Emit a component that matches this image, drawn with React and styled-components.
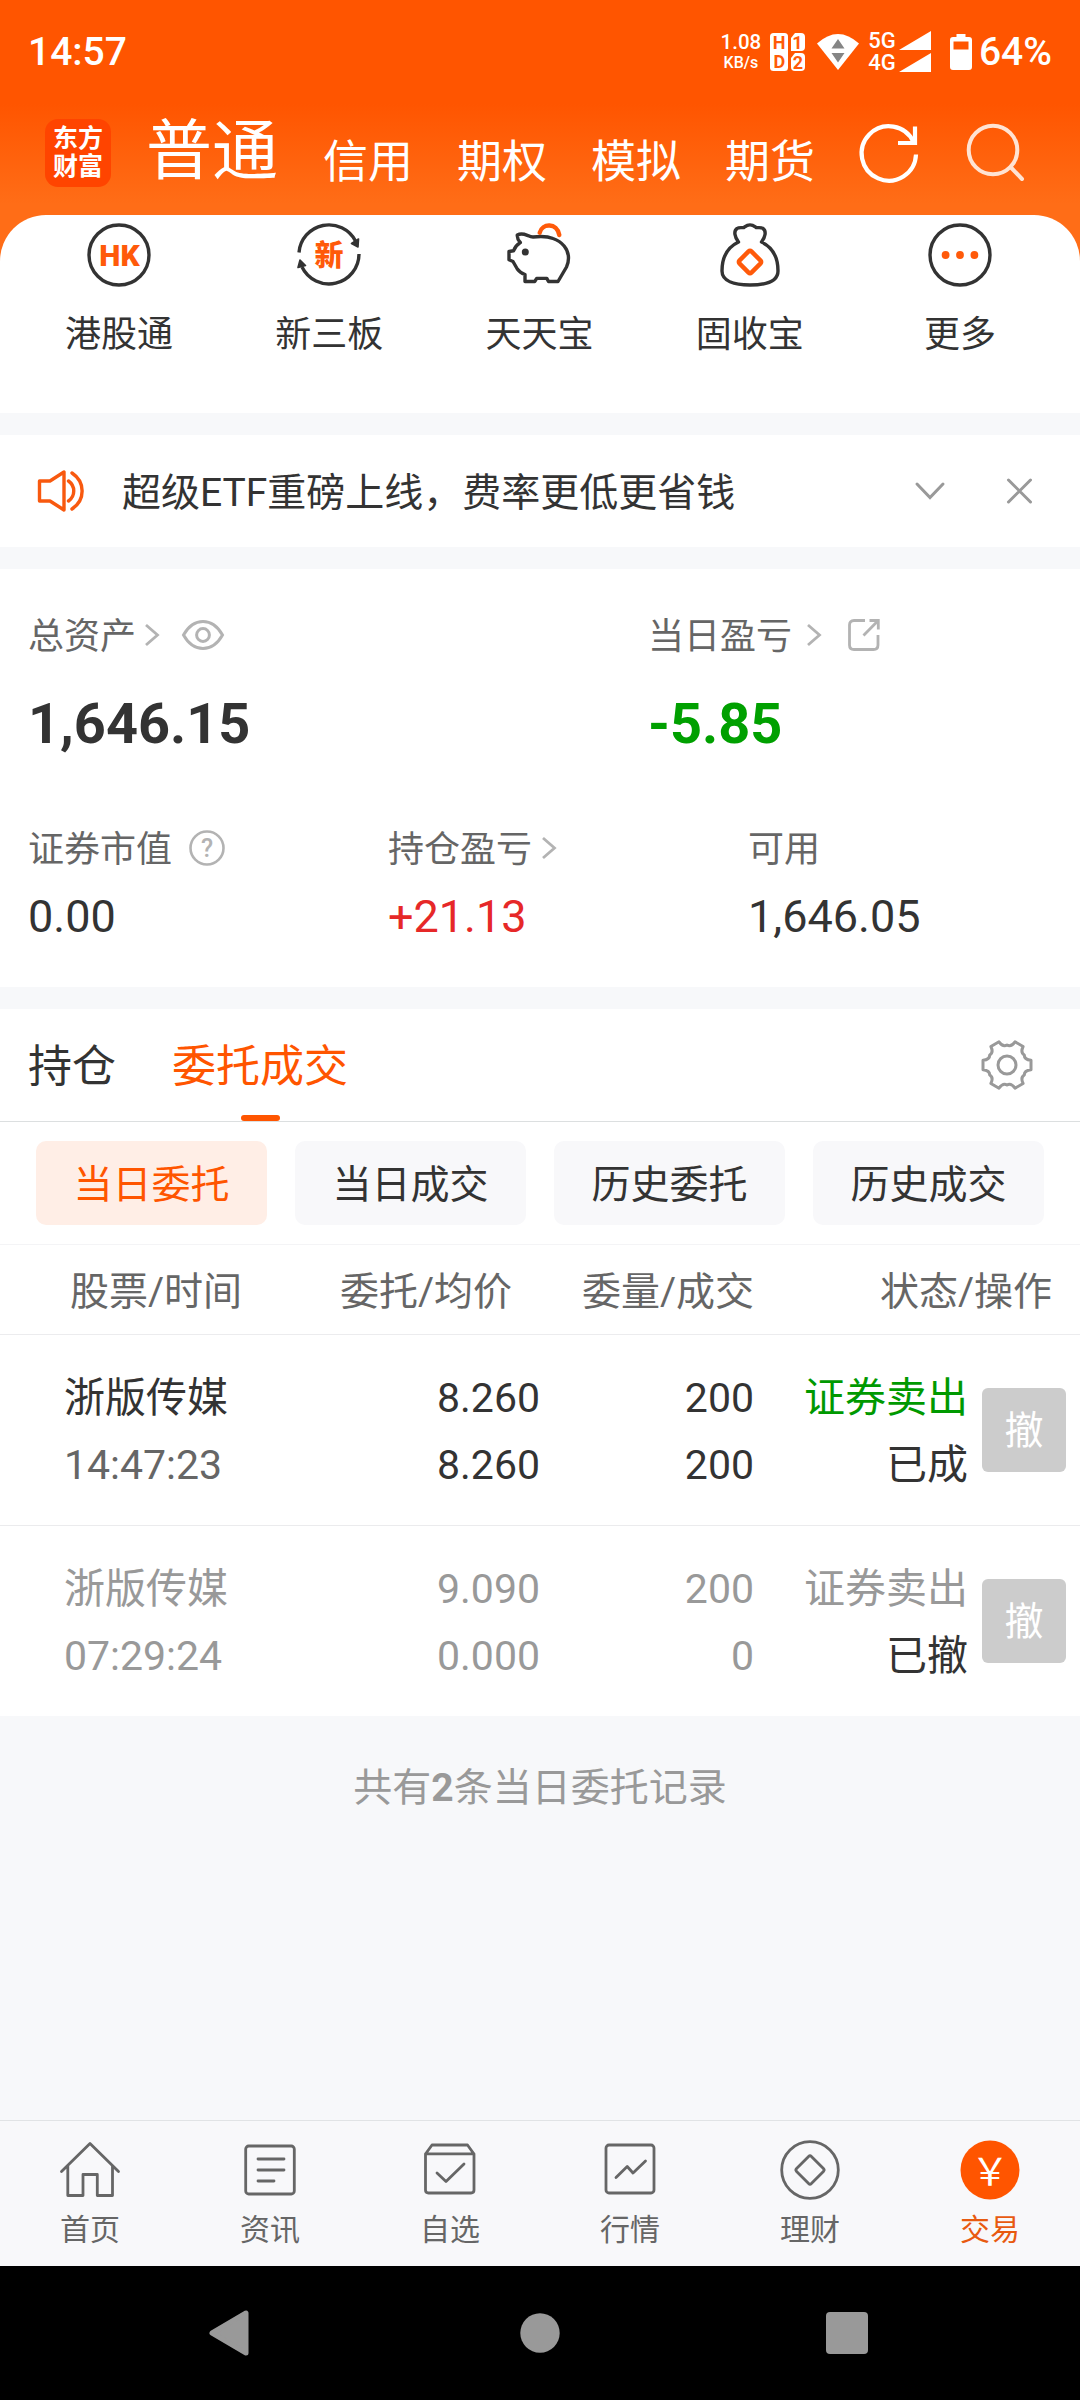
import React from "react";
import styled, { createGlobalStyle } from "styled-components";

const Global = createGlobalStyle`
  * { box-sizing: border-box; }
  html, body { margin: 0; padding: 0; background: #000; }
  body { font-family: Roboto, "Noto Sans CJK SC", sans-serif; color: #333; -webkit-font-smoothing: antialiased; }
  svg { display: block; flex: none; overflow: visible; }
`;

const Screen = styled.div`
  width: 1080px;
  height: 2400px;
  display: flex;
  flex-direction: column;
  overflow: hidden;
  background: #f7f8fa;
`;

const Top = styled.div`
  height: 275px;
  margin-bottom: -60px;
  flex: none;
  background: linear-gradient(#ff5500 0, #ff5500 104px, #ff6d17 204px);
  color: #fff;
`;

const StatusBar = styled.div`
  height: 102px;
  padding: 1px 28px 0;
  display: flex;
  align-items: center;
  justify-content: space-between;
`;

const StatusText = styled.span`
  font-size: 39px;
  line-height: 46px;
  font-weight: 500;
  white-space: nowrap;
`;

const StatusIcons = styled.div`
  display: flex;
  align-items: center;
`;

const Stack = styled.div`
  display: flex;
  flex-direction: column;
  align-items: center;
  width: ${(p) => p.$w}px;
  margin-right: ${(p) => p.$gap}px;
  font-weight: 500;
  white-space: nowrap;
  font-size: ${(p) => p.$size}px;
  line-height: 22px;
`;

const Small = styled.span`
  font-size: 16px;
  line-height: 19px;
`;

const Spaced = styled.div`
  margin-right: ${(p) => p.$gap}px;
`;

const Header = styled.div`
  height: 113px;
  padding: 17px 55px 0 45px;
  display: flex;
  align-items: flex-start;
`;

const Logo = styled.div`
  width: 67px;
  height: 68px;
  border-radius: 13px;
  background: #ff4400;
  font-size: 25px;
  line-height: 28px;
  font-weight: 700;
  text-align: center;
  padding-top: 6px;
  margin-right: 35px;
`;

const Account = styled.div`
  font-size: ${(p) => (p.$active ? 66 : 45)}px;
  line-height: 66px;
  margin-top: ${(p) => (p.$active ? 0 : 11)}px;
  margin-right: ${(p) => p.$gap}px;
  white-space: nowrap;
`;

const HeaderTool = styled.div`
  margin: 1px ${(p) => p.$gap}px 0 0;
`;

const Panel = styled.section`
  background: #fff;
  flex: none;
  margin-bottom: ${(p) => p.$gap || 0}px;
`;

const Quick = styled(Panel)`
  height: 198px;
  border-radius: 46px 46px 0 0;
  display: grid;
  grid-template-columns: repeat(5, 1fr);
  padding: 8px 15px 0 14px;
`;

const QuickItem = styled.div`
  display: flex;
  flex-direction: column;
  align-items: center;
  gap: 25px;
  font-size: 36px;
  line-height: 46px;
`;

const Notice = styled(Panel)`
  height: 112px;
  display: flex;
  align-items: center;
  padding: 0 47px 0 37px;
  font-size: 39px;
  line-height: 50px;
`;

const NoticeText = styled.div`
  flex: 1;
  margin-left: 37px;
  padding-top: 3px;
`;

const Assets = styled(Panel)`
  height: 418px;
  padding: 41px 28px 0;
`;

const AssetRow = styled.div`
  display: grid;
  grid-template-columns: ${(p) => p.$cols};
  height: ${(p) => p.$h}px;
`;

const Label = styled.div`
  display: flex;
  align-items: center;
  height: 46px;
  font-size: 36px;
  color: #666;
  white-space: nowrap;

  svg { margin-top: 3px; }
`;

const BigValue = styled.div`
  margin-top: 35px;
  font-size: 55.9px;
  line-height: 66px;
  font-weight: 700;
  color: ${(p) => p.$color || "#333"};
`;

const Value = styled.div`
  margin-top: 22px;
  font-size: 45px;
  line-height: 52px;
  color: ${(p) => p.$color || "#333"};
`;

const Tabs = styled(Panel)`
  height: 113px;
  border-bottom: 1px solid #dcdfe0;
  padding: 0 48px 0 28px;
  display: flex;
  align-items: stretch;
`;

const Tab = styled.div`
  display: flex;
  flex-direction: column;
  align-items: center;
  justify-content: space-between;
  margin-right: 56px;
  padding-top: 30px;
  font-size: 44px;
  line-height: 56px;
  color: ${(p) => (p.$active ? "#ff5500" : "#333")};
`;

const Underline = styled.div`
  width: 39px;
  height: 6px;
  border-radius: 3px;
  background: #ff5500;
`;

const TabTool = styled.div`
  margin-left: auto;
  align-self: center;
`;

const Chips = styled(Panel)`
  height: 123px;
  border-bottom: 1px solid #f4f4f6;
  padding: 19px 36px 0;
  display: grid;
  grid-template-columns: repeat(4, 1fr);
  gap: 28px;
`;

const Chip = styled.div`
  height: 84px;
  border-radius: 10px;
  background: ${(p) => (p.$active ? "#ffeee6" : "#f8f8fa")};
  color: ${(p) => (p.$active ? "#ff5500" : "#333")};
  font-size: 39px;
  line-height: 88px;
  text-align: center;
`;

const TableHead = styled(Panel)`
  height: 90px;
  border-bottom: 1px solid #ececee;
  padding: 0 28px 3px 70px;
  display: grid;
  grid-template-columns: 180px 262px 242px 1fr;
  align-items: center;
  font-size: 39px;
  color: #666;
  white-space: nowrap;
`;

const HeadCell = styled.div`
  text-align: ${(p) => p.$align || "right"};
`;

const Order = styled(Panel)`
  height: ${(p) => (p.$last ? 190 : 191)}px;
  border-bottom: ${(p) => (p.$last ? "none" : "1px solid #ebebed")};
  padding: 30px 14px 0 64px;
  display: grid;
  grid-template-columns: 230px 246px 214px 214px 1fr;
  font-size: 41px;
  line-height: 67px;
  white-space: nowrap;
`;

const Pair = styled.div`
  text-align: ${(p) => p.$align || "right"};
`;

const Cell = styled.div`
  color: ${(p) => p.$color};
`;

const Cancel = styled.div`
  width: 84px;
  height: 84px;
  margin-top: 23px;
  justify-self: end;
  border-radius: 6px;
  background: #ccc;
  color: #fff;
  font-size: 39px;
  line-height: 87px;
  text-align: center;
`;

const Summary = styled.div`
  flex: 1;
  padding-top: 44px;
  text-align: center;
  font-size: 39px;
  line-height: 56px;
  color: #999;
`;

const NavBar = styled.nav`
  height: 146px;
  flex: none;
  border-top: 1px solid #e1e3e5;
  background: #f8f8fa;
  display: grid;
  grid-template-columns: repeat(6, 1fr);
`;

const NavItem = styled.div`
  display: flex;
  flex-direction: column;
  align-items: center;
  padding-top: 19px;
  gap: 10px;
  font-size: 30px;
  line-height: 40px;
  color: ${(p) => (p.$active ? "#e85a10" : "#666")};
`;

const SystemBar = styled.div`
  height: 134px;
  flex: none;
  background: #000;
  display: flex;
  align-items: center;
  justify-content: space-between;
  padding: 0 212px 0 208px;
`;

const Glyph = styled.text`
  font-family: Roboto, "Noto Sans CJK SC", sans-serif;
  font-size: ${(p) => p.$size}px;
  font-weight: ${(p) => p.$weight || 400};
  fill: ${(p) => p.$color};
  stroke: none;
  text-anchor: middle;
`;

const YuanGlyph = styled(Glyph)`
  font-family: "Noto Sans CJK SC", sans-serif;
`;

const Arrow = ({ gap }) => (
  <Spaced $gap={gap}>
    <svg width="14" height="22" viewBox="0 0 14 22" fill="none" stroke="#b3b3b3" strokeWidth="2.8">
      <path d="M1 1 L12.5 11 L1 21" />
    </svg>
  </Spaced>
);

const dark = { fill: "none", stroke: "#333", strokeWidth: 3.4, strokeLinejoin: "round", strokeLinecap: "round" };

const QuickSvg = ({ children }) => (
  <svg width="64" height="64" viewBox="0 0 64 64">{children}</svg>
);

const HkIcon = () => (
  <QuickSvg>
    <circle cx="32" cy="32" r="30" {...dark} />
    <Glyph x="32.500" y="42.8" $size={30} $weight={900} $color="#ff5a0a">HK</Glyph>
  </QuickSvg>
);

const NewBoardIcon = () => (
  <QuickSvg>
    <path d="M2 29.5 A30 30 0 0 1 58.500 18" {...dark} strokeLinecap="butt" />
    <path d="M62 31 A30 30 0 0 1 5 44" {...dark} strokeLinecap="butt" />
    <path d="M61.500 16 L61 24 L54.500 20.500 Z M1 44.500 L3 37 L8.500 42.500 Z" fill="#333" stroke="#333" strokeWidth="1.600" strokeLinejoin="round" />
    <Glyph x="32" y="42.500" $size={29} $weight={900} $color="#ff5a0a">新</Glyph>
  </QuickSvg>
);

const PigIcon = () => (
  <QuickSvg>
    <path d="M10.300 12 C13 10.600 17 11 20.300 12.300 C22 13 23 14 26 14 C32 13.300 40 13 46 15.500 C55 18.500 61.500 26 61.500 35 C61.500 39 61 41 59.500 44 L51 58.500 H41.500 L39.800 55.400 H29.700 L27.700 58.500 H18 V51.500 C14 50 12 48.500 10.300 46 L6 38.500 L2 36.800 V28.500 L6.500 27.800 C8 24 10 21.500 13.300 19.500 C11 17 10 15 10.300 12 Z" {...dark} />
    <circle cx="18.300" cy="29" r="3.500" fill="#333" />
    <path d="M32.700 9.700 C35 0 50 -0.500 52.300 12" fill="none" stroke="#ff5a0a" strokeWidth="4.400" strokeLinecap="round" />
  </QuickSvg>
);

const BagIcon = () => (
  <QuickSvg>
    <path d="M20.500 19 C16.500 14 15.500 8 19 5.500 C21 4 24 5 26 4.500 C28 3 29 1.900 32 1.900 C35 1.900 36 3 38 4.500 C40 5 43 4 45 5.500 C48.500 8 47.500 14 43.500 19 C54 24 60 34 60 48 C60 58 48 62 32 62 C16 62 4 58 4 48 C4 34 10 24 20.500 19 Z" {...dark} />
    <rect x="23.500" y="30.500" width="17" height="17" rx="2" transform="rotate(45 32 39)" fill="none" stroke="#ff5a0a" strokeWidth="4.400" />
  </QuickSvg>
);

const MoreIcon = () => (
  <QuickSvg>
    <circle cx="32" cy="32" r="30" {...dark} />
    {[17.6, 32, 46.4].map((x) => <circle key={x} cx={x} cy="32" r="3.900" fill="#ff5a0a" />)}
  </QuickSvg>
);

const navStroke = { fill: "none", stroke: "#666", strokeWidth: 2.8, strokeLinejoin: "round", strokeLinecap: "round" };

const NavSvg = ({ children }) => (
  <svg width="60" height="60" viewBox="0 0 60 60" {...navStroke}>{children}</svg>
);

const navIcons = {
  home: <NavSvg><path d="M1.500 31.500 L30 3.500 L58.500 31.500 M7.800 26 V55.500 H23 V34.500 H37.300 V55.500 H52.500 V26" /></NavSvg>,
  news: <NavSvg><rect x="5.700" y="6" width="48.600" height="48" rx="3" /><path d="M18 19 H44 M18 30 H44 M18 41 H34" /></NavSvg>,
  picks: <NavSvg><path d="M5.500 14 L12 5 H47.500 L54 14 V50 Q54 53 51 53 H8.500 Q5.500 53 5.500 50 Z M5.500 13.800 H54" /><path d="M17 33 L26 41.500 L44 24" /></NavSvg>,
  quotes: <NavSvg><rect x="6" y="5" width="48" height="48" rx="3" /><path d="M16 37.500 L27.200 26.500 L33 33 L45.500 21" /></NavSvg>,
  wealth: <NavSvg><circle cx="30" cy="30" r="28.300" /><rect x="19.500" y="19.500" width="21" height="21" rx="2" transform="rotate(45 30 30)" /></NavSvg>,
  trade: <NavSvg><circle cx="30" cy="30" r="29.500" fill="#ff5500" stroke="none" /><YuanGlyph x="30" y="45" $size={38} $color="#fff">￥</YuanGlyph></NavSvg>,
};

const quickItems = [
  ["港股通", HkIcon],
  ["新三板", NewBoardIcon],
  ["天天宝", PigIcon],
  ["固收宝", BagIcon],
  ["更多", MoreIcon],
];

const orders = [
  { name: "浙版传媒", time: "14:47:23", price: "8.260", avg: "8.260", qty: "200", done: "200", side: "证券卖出", state: "已成", main: "#333", sub: "#666", sideColor: "#009900" },
  { name: "浙版传媒", time: "07:29:24", price: "9.090", avg: "0.000", qty: "200", done: "0", side: "证券卖出", state: "已撤", main: "#999", sub: "#999", sideColor: "#999" },
];

const navItems = [
  ["首页", "home"],
  ["资讯", "news"],
  ["自选", "picks"],
  ["行情", "quotes"],
  ["理财", "wealth"],
  ["交易", "trade"],
];

const gearPath = (() => {
  const pts = [];
  for (let i = 0; i < 6; i++) {
    const a = (i * 60 * Math.PI) / 180;
    const at = (r, d) => {
      const t = a + (d * Math.PI) / 180;
      return `${(25 + r * Math.cos(t)).toFixed(1)} ${(25 + r * Math.sin(t)).toFixed(1)}`;
    };
    pts.push(`${i ? "L" : "M"}${at(24.5, -11)} L${at(24.5, 11)} Q${at(18, 17)} ${at(20, 30)} Q${at(18, 43)} ${at(24.5, 49)}`);
  }
  return pts.join(" ") + " Z";
})();

const StatusIndicators = () => (
  <StatusIcons>
    <Stack $w={40} $gap={9} $size={20.5}>
      1.08
      <Small>KB/s</Small>
    </Stack>
    <Spaced $gap={12}>
      <svg width="35" height="38" viewBox="0 0 35 38">
        <rect x="0" y="0" width="18" height="38" rx="3.500" fill="#fff" />
        <path d="M21 5 L25 0 H31 Q35 0 35 4 V14 Q35 18 31 18 H21 Z" fill="#fff" />
        <path d="M21 25 L25 20 H31 Q35 20 35 24 V34 Q35 38 31 38 H25 Q21 38 21 34 Z" fill="#fff" />
        <Glyph x="9" y="16" $size={18} $weight={700} $color="#ff5a08">H</Glyph>
        <Glyph x="9.300" y="34.500" $size={18} $weight={700} $color="#ff5a08">D</Glyph>
        <Glyph x="27.500" y="15.500" $size={18} $weight={700} $color="#ff5a08">1</Glyph>
        <Glyph x="28" y="35.500" $size={18} $weight={700} $color="#ff5a08">2</Glyph>
      </svg>
    </Spaced>
    <Spaced $gap={9}>
      <svg width="42" height="36" viewBox="0 0 42 36">
        <path d="M0 9.500 Q21 -9.500 42 9.500 L21 36 Z" fill="#fff" />
        <path d="M21 5 L27.500 14.500 H14.500 Z M21 28.500 L27.500 19 H14.500 Z" fill="#858585" />
      </svg>
    </Spaced>
    <Stack $w={28} $gap={3} $size={22}>
      <span>5G</span>
      <span>4G</span>
    </Stack>
    <Spaced $gap={19}>
      <svg width="32" height="42" viewBox="0 0 32 42">
        <path d="M32 0 V19 H0 Z M32 22 V41 H0 Z" fill="#fff" />
      </svg>
    </Spaced>
    <Spaced $gap={7}>
      <svg width="22" height="36" viewBox="0 0 22 36">
        <path fillRule="evenodd" d="M6.500 0 H15.500 V3 H19 Q22 3 22 6 V33 Q22 36 19 36 H3 Q0 36 0 33 V6 Q0 3 3 3 H6.500 Z M3.500 7.500 V15.500 H18.500 V7.500 Z" fill="#fff" />
      </svg>
    </Spaced>
    <StatusText>64%</StatusText>
  </StatusIcons>
);

export default function App() {
  return (
    <Screen>
      <Global />
      <Top>
        <StatusBar>
          <StatusText>14:57</StatusText>
          <StatusIndicators />
        </StatusBar>
        <Header>
          <Logo>东方<br />财富</Logo>
          <Account $active $gap={45}>普通</Account>
          <Account $gap={44}>信用</Account>
          <Account $gap={44}>期权</Account>
          <Account $gap={44}>模拟</Account>
          <Account $gap={45}>期货</Account>
          <HeaderTool $gap={49}>
            <svg width="58" height="66" viewBox="0 0 58 66" fill="none" stroke="#fff" strokeWidth="4.200">
              <path d="M56 34.500 A27.200 27.200 0 1 1 53.500 22" />
              <path d="M55 6.500 V23 H38" />
            </svg>
          </HeaderTool>
          <HeaderTool $gap={0}>
            <svg width="58" height="66" viewBox="0 0 58 66" fill="none" stroke="#ffe3d3" strokeWidth="4" strokeLinecap="round">
              <circle cx="26" cy="30" r="24.300" />
              <path d="M44 47.500 L55 59" />
            </svg>
          </HeaderTool>
        </Header>
      </Top>

      <Quick $gap={22}>
        {quickItems.map(([label, Icon]) => (
          <QuickItem key={label}>
            <Icon />
            <span>{label}</span>
          </QuickItem>
        ))}
      </Quick>

      <Notice $gap={22}>
        <svg width="48" height="42" viewBox="0 0 48 42" fill="none" stroke="#f8590f" strokeWidth="3.400" strokeLinejoin="round" strokeLinecap="round">
          <path d="M2.500 11 H13 L27 2 V40 L13 31 H2.500 Z" />
          <path d="M31.500 11 C38.500 16 38.500 26 31.500 31 M35 3 C48.500 12 48.500 30 35 39" />
        </svg>
        <NoticeText>超级ETF重磅上线，费率更低更省钱</NoticeText>
        <Spaced $gap={63}>
          <svg width="28" height="16" viewBox="0 0 28 16" fill="none" stroke="#999" strokeWidth="3" strokeLinecap="round">
            <path d="M1 1 L14 14.500 L27 1" />
          </svg>
        </Spaced>
        <svg width="26" height="24" viewBox="0 0 26 24" fill="none" stroke="#999" strokeWidth="3" strokeLinecap="round">
          <path d="M1.500 1 L23.500 23 M23.500 1 L1.500 23" />
        </svg>
      </Notice>

      <Assets $gap={22}>
        <AssetRow $cols="620px 1fr" $h={213}>
          <div>
            <Label>
              <Spaced $gap={9}>总资产</Spaced>
              <Arrow gap={23} />
              <svg width="42" height="30" viewBox="0 0 42 30" fill="none" stroke="#b3b3b3" strokeWidth="3">
                <path d="M1.500 15 C6 7 13 1.500 21 1.500 C29 1.500 36 7 40.500 15 C36 23 29 28.500 21 28.500 C13 28.500 6 23 1.500 15 Z" />
                <circle cx="21" cy="15" r="6.400" />
              </svg>
            </Label>
            <BigValue>1,646.15</BigValue>
          </div>
          <div>
            <Label>
              <Spaced $gap={15}>当日盈亏</Spaced>
              <Arrow gap={27} />
              <svg width="32" height="32" viewBox="0 0 32 32" fill="none" stroke="#b3b3b3" strokeWidth="2.800">
                <path d="M17 1.500 H6 Q1.500 1.500 1.500 6 V26 Q1.500 30.500 6 30.500 H25.500 Q30 30.500 30 26 V16" />
                <path d="M21.500 1.500 H30.300 V10.500 M30 1.800 L15.500 16.500" />
              </svg>
            </Label>
            <BigValue $color="#00a000">-5.85</BigValue>
          </div>
        </AssetRow>
        <AssetRow $cols="360px 360px 1fr" $h={140}>
          <div>
            <Label>
              <Spaced $gap={17}>证券市值</Spaced>
              <svg width="36" height="36" viewBox="0 0 36 36" fill="none" stroke="#b3b3b3" strokeWidth="2.600">
                <circle cx="18" cy="18" r="16.500" />
                <Glyph x="18" y="27" $size={25} $weight={500} $color="#b3b3b3">?</Glyph>
              </svg>
            </Label>
            <Value>0.00</Value>
          </div>
          <div>
            <Label>
              <Spaced $gap={10}>持仓盈亏</Spaced>
              <Arrow gap={0} />
            </Label>
            <Value $color="#e62828">+21.13</Value>
          </div>
          <div>
            <Label>可用</Label>
            <Value>1,646.05</Value>
          </div>
        </AssetRow>
      </Assets>

      <Tabs>
        <Tab>持仓</Tab>
        <Tab $active>
          委托成交
          <Underline />
        </Tab>
        <TabTool>
          <svg width="50" height="50" viewBox="0 0 50 50" fill="none" stroke="#999" strokeWidth="3" strokeLinejoin="round">
            <path d={gearPath} />
            <circle cx="25" cy="25" r="9" />
          </svg>
        </TabTool>
      </Tabs>

      <Chips>
        {["当日委托", "当日成交", "历史委托", "历史成交"].map((t, i) => (
          <Chip key={t} $active={i === 0}>{t}</Chip>
        ))}
      </Chips>

      <TableHead>
        <HeadCell $align="left">股票/时间</HeadCell>
        <HeadCell>委托/均价</HeadCell>
        <HeadCell>委量/成交</HeadCell>
        <HeadCell>状态/操作</HeadCell>
      </TableHead>

      {orders.map((o, i) => (
        <Order key={o.time} $last={i === orders.length - 1}>
          <Pair $align="left">
            <Cell $color={o.main}>{o.name}</Cell>
            <Cell $color={o.sub}>{o.time}</Cell>
          </Pair>
          <Pair>
            <Cell $color={o.main}>{o.price}</Cell>
            <Cell $color={o.main}>{o.avg}</Cell>
          </Pair>
          <Pair>
            <Cell $color={o.main}>{o.qty}</Cell>
            <Cell $color={o.main}>{o.done}</Cell>
          </Pair>
          <Pair>
            <Cell $color={o.sideColor}>{o.side}</Cell>
            <Cell $color="#333">{o.state}</Cell>
          </Pair>
          <Cancel>撤</Cancel>
        </Order>
      ))}

      <Summary>共有<b>2</b>条当日委托记录</Summary>

      <NavBar>
        {navItems.map(([label, icon]) => (
          <NavItem key={label} $active={icon === "trade"}>
            {navIcons[icon]}
            <span>{label}</span>
          </NavItem>
        ))}
      </NavBar>

      <SystemBar>
        <svg width="46" height="46" viewBox="0 0 46 46">
          <path d="M4 23 L38 3 V43 Z" fill="#999" stroke="#999" strokeWidth="5" strokeLinejoin="round" />
        </svg>
        <svg width="40" height="40" viewBox="0 0 40 40">
          <circle cx="20" cy="20" r="19.700" fill="#999" />
        </svg>
        <svg width="42" height="42" viewBox="0 0 42 42">
          <rect width="42" height="42" rx="4" fill="#999" />
        </svg>
      </SystemBar>
    </Screen>
  );
}
